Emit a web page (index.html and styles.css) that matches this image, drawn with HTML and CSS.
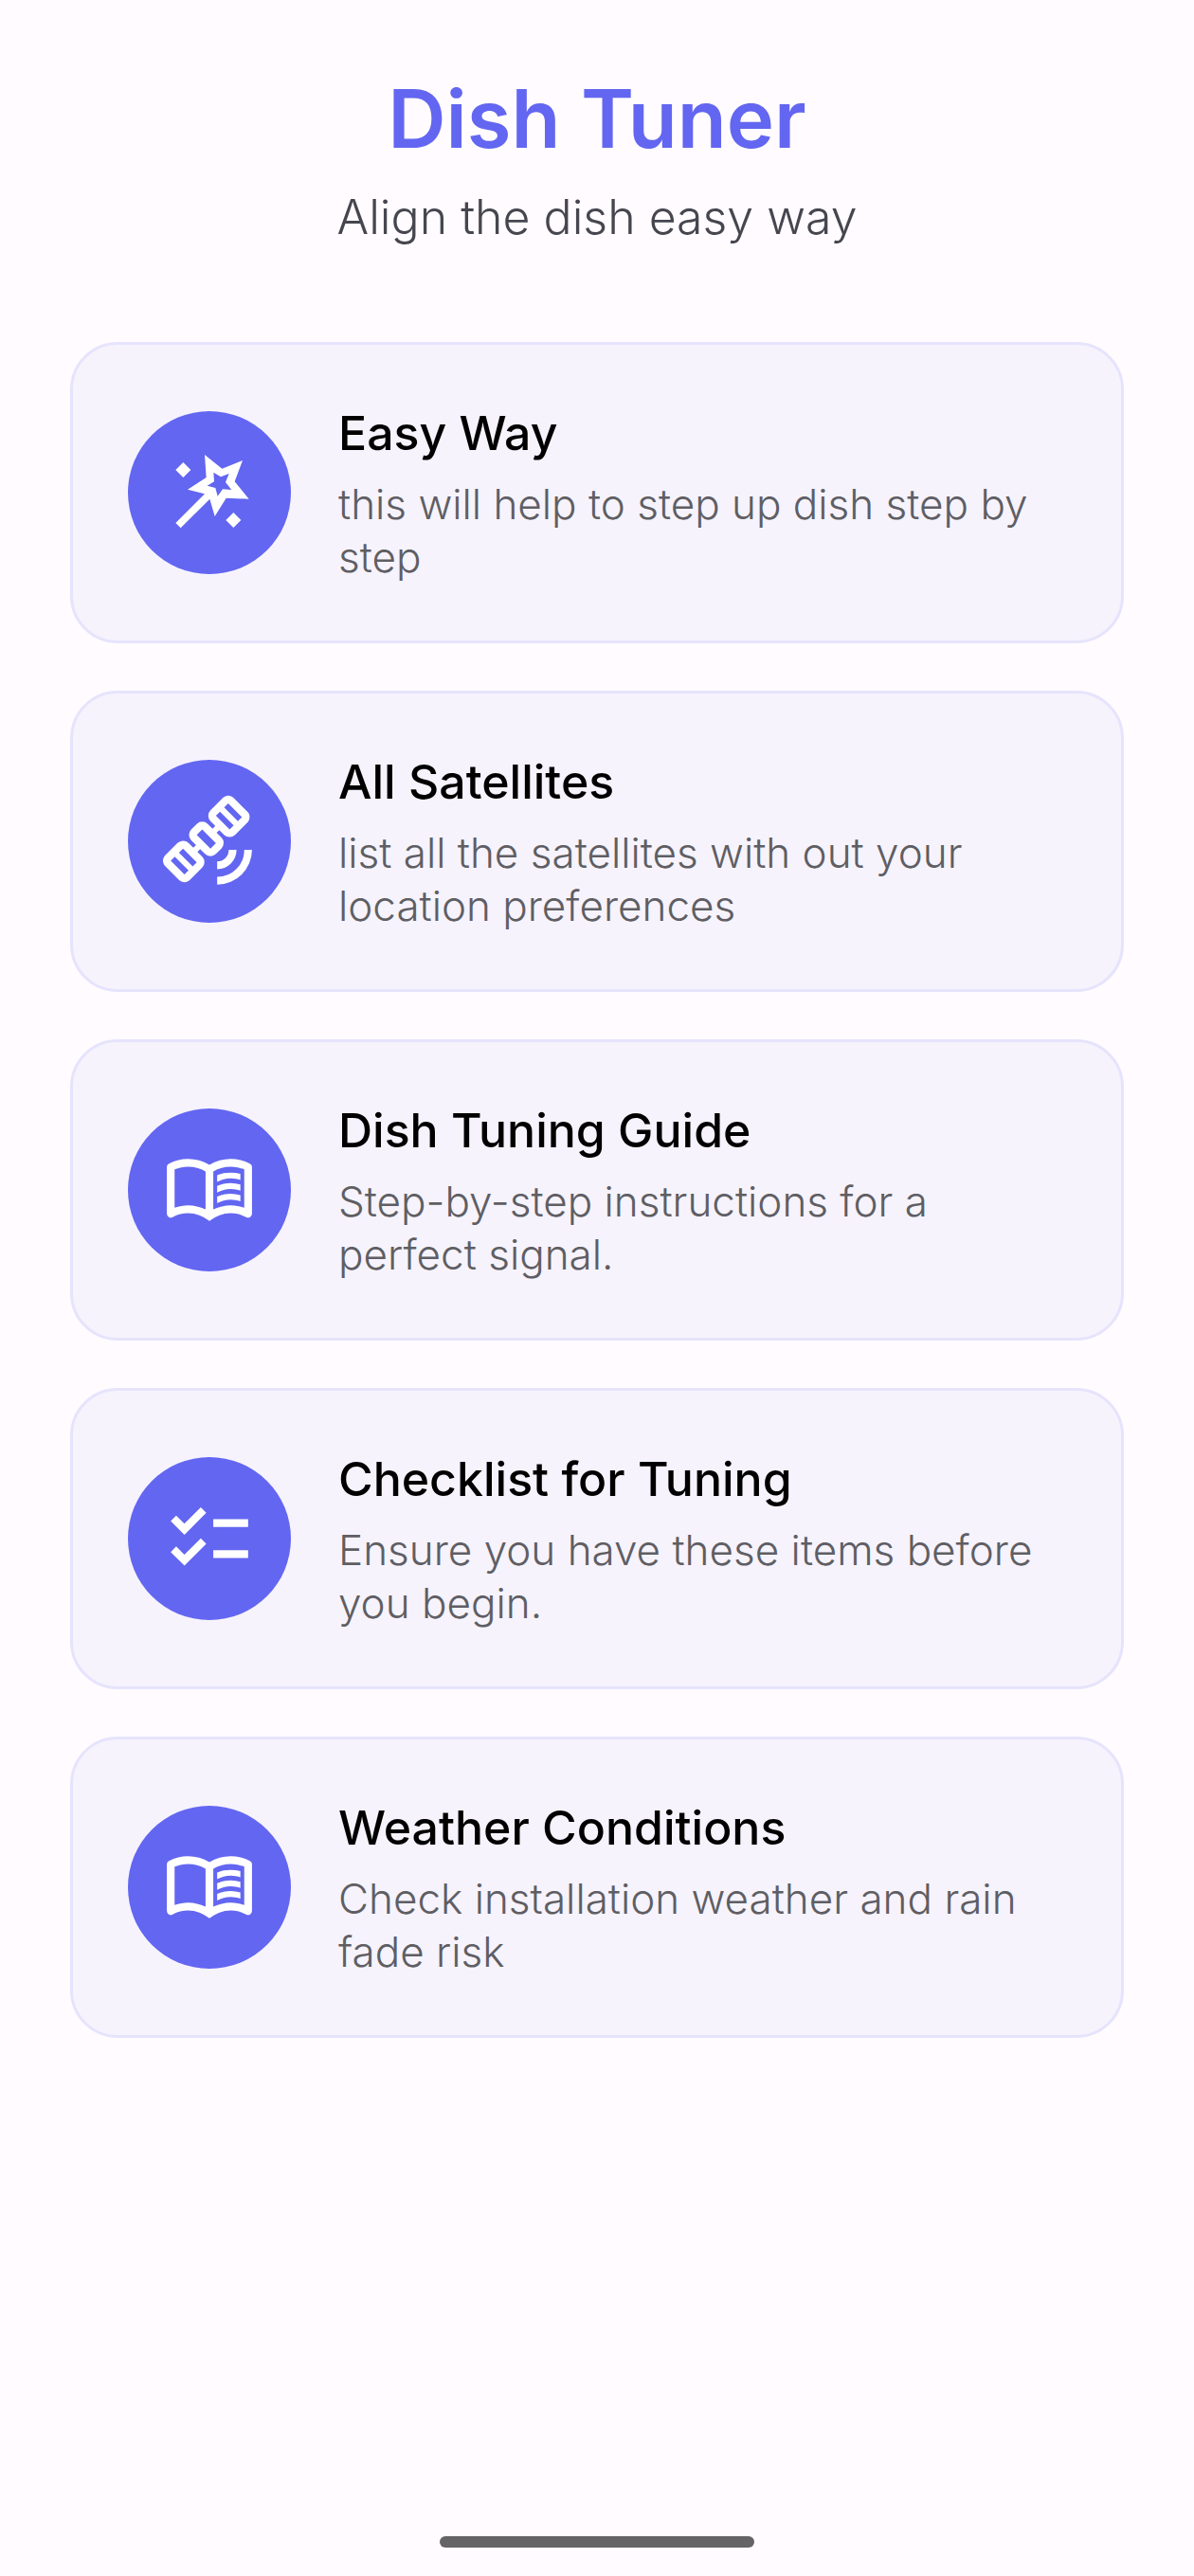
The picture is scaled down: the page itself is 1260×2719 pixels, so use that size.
FILE: index.html
```html
<!DOCTYPE html>
<html lang="en">
<head>
    <meta charset="UTF-8">
    <meta name="viewport" content="width=device-width, initial-scale=1.0">
    <title>Dish Tuner</title>
    <link rel="stylesheet" href="styles.css">
</head>
<body>

    <!-- Shared icon -->
    <svg class="sprite" aria-hidden="true">
        <symbol id="icon-book" viewBox="0 -960 960 960">
            <path d="M560-564v-68q33-14 67.5-21t72.5-7q26 0 51 4t49 10v64q-24-9-48.5-13.5T700-600q-38 0-73 9.5T560-564Zm0 220v-68q33-14 67.5-21t72.5-7q26 0 51 4t49 10v64q-24-9-48.5-13.5T700-380q-38 0-73 9t-67 27Zm0-110v-68q33-14 67.5-21t72.5-7q26 0 51 4t49 10v64q-24-9-48.5-13.5T700-490q-38 0-73 9.5T560-454ZM260-320q47 0 91.5 10.5T440-278v-394q-41-24-87-36t-93-12q-36 0-71.5 7T120-692v396q35-12 69.5-18t70.5-6Zm260 42q44-21 88.5-31.5T700-320q36 0 70.5 6t69.5 18v-396q-33-14-68.5-21t-71.5-7q-47 0-93 12t-87 36v394Zm-40 118q-48-38-104-59t-116-21q-42 0-82.5 11T100-198q-21 11-40.5-1T40-234v-482q0-11 5.5-21T62-752q46-24 96-36t102-12q58 0 113.5 15T480-740q51-30 106.5-45T700-800q52 0 102 12t96 36q11 5 16.5 15t5.5 21v482q0 23-19.5 35t-40.5 1q-37-20-77.5-31T700-240q-60 0-116 21t-104 59Z"/>
        </symbol>
    </svg>

    <header class="header">
        <h1>Dish Tuner</h1>
        <p>Align the dish easy way</p>
    </header>

    <main class="menu">
        <a class="card" href="#easy-way">
            <span class="card-icon">
                <svg viewBox="125 123 294 294" aria-hidden="true">
                    <path fill-rule="evenodd" d="M257 150L312 194L377 168L352 235L397 290L325 287L289 345L273 290L181 382L165 366L257 274L203 260L262 222ZM285 206L308 220L334 210L323 237L342 261L314 259L298 281L291 255L265 248L287 235Z"/>
                    <path d="M189 174l24 24l-24 24l-24-24ZM348 333l24 24l-24 24l-24-24Z"/>
                </svg>
            </span>
            <span class="card-text">
                <span class="card-title">Easy Way</span>
                <span class="card-desc">this will help to step up dish step by step</span>
            </span>
        </a>

        <a class="card" href="#satellites">
            <span class="card-icon">
                <svg viewBox="0 -960 960 960" aria-hidden="true">
                    <path d="M560-32v-80q117 0 198.5-81.5T840-392h80q0 75-28.5 140.5t-77 114q-48.5 48.5-114 77T560-32Zm0-160v-80q50 0 85-35t35-85h80q0 83-58.5 141.5T560-192ZM222-57q-15 0-30-6t-27-17L23-222q-11-12-17-27t-6-30q0-16 6-30.5T23-335l127-127q23-23 57-23.5t57 22.5l50 50 28-28-50-50q-23-23-23-56t23-56l57-57q23-23 57-23t57 23l50 50 28-28-50-50q-23-23-23-56.5t23-56.5l127-127q12-12 27-18t30-6q15 0 29.5 6t26.5 18l142 142q12 11 17.5 25.5T895-730q0 15-5.5 30T872-673L745-546q-23 23-56.5 23T632-546l-50-50-28 28 50 50q23 23 22.5 56.5T603-405l-56 56q-23 23-56.5 23T434-349l-50-50-28 28 50 50q23 23 22.5 57T405-207L278-80q-11 11-25.5 17T222-57Zm0-79 42-42-142-142-42 42 142 142Zm85-85 42-42-142-142-42 42 142 142Zm184-184 56-56-142-142-56 56 142 142Zm198-198 42-42-142-142-42 42 142 142Zm85-85 42-42-142-142-42 42 142 142Z"/>
                </svg>
            </span>
            <span class="card-text">
                <span class="card-title">All Satellites</span>
                <span class="card-desc">list all the satellites with out your location preferences</span>
            </span>
        </a>

        <a class="card" href="#guide">
            <span class="card-icon">
                <svg aria-hidden="true"><use href="#icon-book"/></svg>
            </span>
            <span class="card-text">
                <span class="card-title">Dish Tuning Guide</span>
                <span class="card-desc">Step-by-step instructions for a perfect signal.</span>
            </span>
        </a>

        <a class="card" href="#checklist">
            <span class="card-icon">
                <svg viewBox="0 0 24 24" aria-hidden="true">
                    <path d="M22 7h-9v2h9V7zm0 8h-9v2h9v-2zM5.54 11L2 7.46l1.41-1.41 2.12 2.12 4.24-4.24 1.41 1.41L5.54 11zm0 8L2 15.46l1.41-1.41 2.12 2.12 4.24-4.24 1.41 1.41L5.54 19z"/>
                </svg>
            </span>
            <span class="card-text">
                <span class="card-title">Checklist for Tuning</span>
                <span class="card-desc">Ensure you have these items before you begin.</span>
            </span>
        </a>

        <a class="card" href="#weather">
            <span class="card-icon">
                <svg aria-hidden="true"><use href="#icon-book"/></svg>
            </span>
            <span class="card-text">
                <span class="card-title">Weather Conditions</span>
                <span class="card-desc">Check installation weather and rain fade risk</span>
            </span>
        </a>
    </main>

    <div class="home-bar"></div>

</body>
</html>
```
FILE: styles.css
```css
* {
    box-sizing: border-box;
}

body {
    margin: 0;
    min-height: 100vh;
    display: flex;
    flex-direction: column;
    background: #fffbff;
    color: #000;
    font-family: Inter, "Open Sans", sans-serif;
}

.sprite {
    display: none;
}

/* Page heading */
.header {
    padding: 70px 74px 0;
    text-align: center;
}

.header h1 {
    margin: 0;
    color: #6366f1;
    font-size: 85px;
    font-weight: 600;
    line-height: 112px;
}

.header p {
    margin: 12px 0 0;
    color: #46464f;
    font-size: 50px;
    font-weight: 300;
    line-height: 70px;
}

/* List of cards */
.menu {
    display: flex;
    flex-direction: column;
    gap: 50px;
    padding: 97px 74px 50px;
}

.card {
    display: flex;
    align-items: center;
    gap: 50px;
    padding: 60px 58px;
    border: 3px solid #e6e4fc;
    border-radius: 50px;
    background: #f6f3fd;
    color: inherit;
    text-decoration: none;
}

.card-icon {
    flex: none;
    display: flex;
    align-items: center;
    justify-content: center;
    width: 172px;
    height: 172px;
    border-radius: 50%;
    background: #6366f1;
}

.card-icon svg {
    width: 98px;
    height: 98px;
    fill: #fff;
}

.card-text {
    flex: 1;
    display: flex;
    flex-direction: column;
    gap: 14px;
}

.card-title {
    font-size: 50px;
    font-weight: 500;
    line-height: 66px;
}

.card-desc {
    color: #5f5e63;
    font-size: 44px;
    font-weight: 300;
    line-height: 56px;
}

/* Gesture bar at the bottom of the screen */
.home-bar {
    width: 332px;
    height: 12px;
    margin: auto auto 30px;
    border-radius: 6px;
    background: #656366;
}
```
